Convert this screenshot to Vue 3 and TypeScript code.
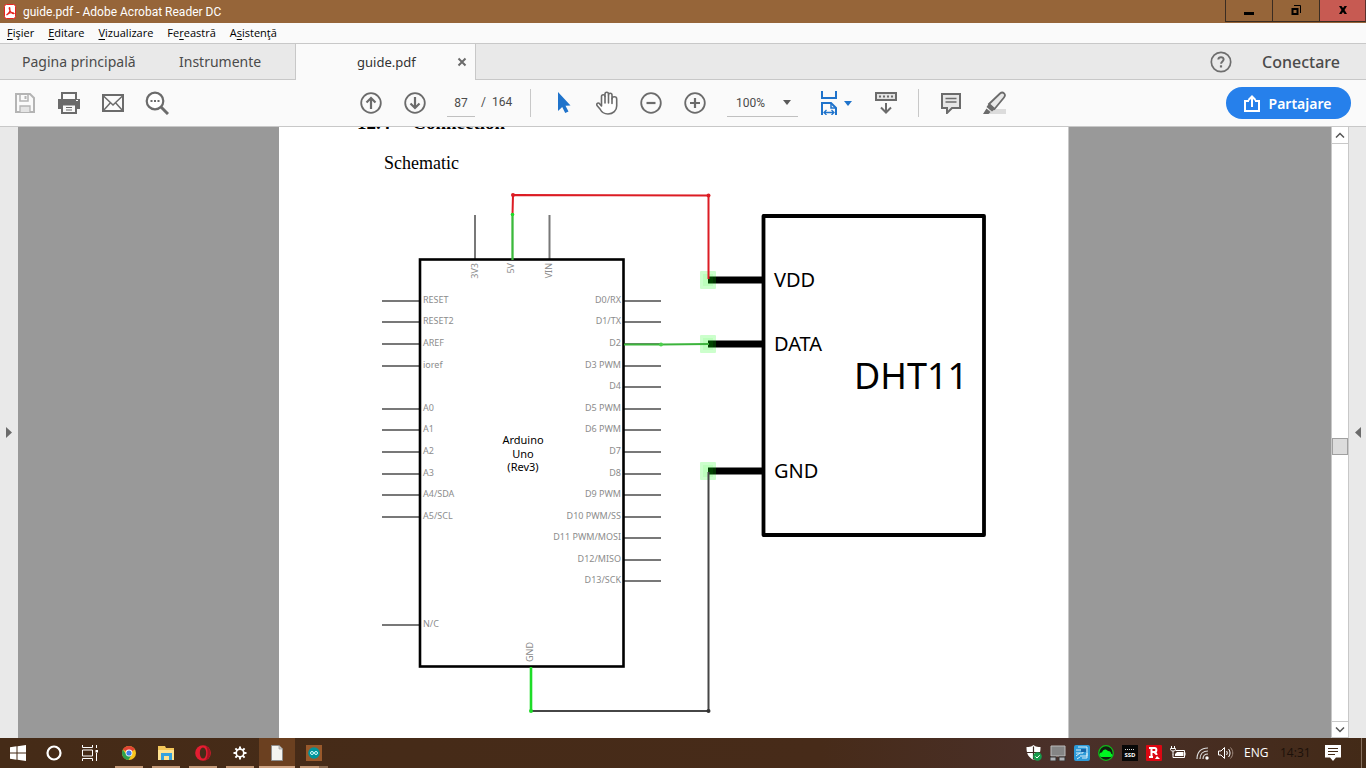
<script setup lang="ts">
import { ref } from 'vue'

interface Pin { label: string; y: number }

const menus: [string, string, string][] = [
  ['', 'F', 'işier'], ['', 'E', 'ditare'], ['', 'V', 'izualizare'], ['Fe', 'r', 'eastră'], ['A', 's', 'istenţă'],
]
const page = ref('87')
const zoom = ref('100%')

const leftPins: Pin[] = [
  { label: 'RESET', y: 301 }, { label: 'RESET2', y: 322 }, { label: 'AREF', y: 344 }, { label: 'ioref', y: 366 },
  { label: 'A0', y: 409 }, { label: 'A1', y: 430 }, { label: 'A2', y: 452 }, { label: 'A3', y: 474 },
  { label: 'A4/SDA', y: 495 }, { label: 'A5/SCL', y: 517 }, { label: 'N/C', y: 625 },
]
const rightPins: Pin[] = [
  { label: 'D0/RX', y: 301 }, { label: 'D1/TX', y: 322 }, { label: 'D2', y: 344 }, { label: 'D3 PWM', y: 366 },
  { label: 'D4', y: 387 }, { label: 'D5 PWM', y: 409 }, { label: 'D6 PWM', y: 430 }, { label: 'D7', y: 452 },
  { label: 'D8', y: 474 }, { label: 'D9 PWM', y: 495 }, { label: 'D10 PWM/SS', y: 517 }, { label: 'D11 PWM/MOSI', y: 538 },
  { label: 'D12/MISO', y: 560 }, { label: 'D13/SCK', y: 581 },
]
const sensorPins: Pin[] = [{ label: 'VDD', y: 280 }, { label: 'DATA', y: 344 }, { label: 'GND', y: 471 }]
</script>

<template>
  <div class="app">
    <header class="titlebar">
      <svg class="app-icon" width="12" height="15" viewBox="0 0 12 15"><rect x=".5" y=".5" width="11" height="14" rx="2" fill="#fff" stroke="#e8251f" /><path d="M2.500 11C5 9.500 6.300 6.500 5.800 4C5.500 3 4.800 4 5.500 5.500C6.500 8 8 9.800 10 9.500C9 8 5 8.500 2.500 11Z" fill="none" stroke="#e8251f" stroke-width="1.200" /></svg>
      <span class="title">guide.pdf - Adobe Acrobat Reader DC</span>
      <div class="win-buttons">
        <button aria-label="Minimizare"><svg width="12" height="12"><path d="M1 7h10v3H1z" /></svg></button>
        <button aria-label="Restabilire"><svg width="12" height="12"><path d="M2.500 4h5v5h-5z" fill="none" stroke="#000" stroke-width="2" /><path d="M4 .5h6.500V8" fill="none" stroke="#000" /></svg></button>
        <button class="close" aria-label="Închidere"><svg width="12" height="12"><path d="M2 1h2.500L6 3l1.500-2H10L7.500 5 10 9H7.500L6 7l-1.500 2H2l2.500-4z" /></svg></button>
      </div>
    </header>

    <nav class="menubar">
      <button v-for="m in menus" :key="m[1]">{{ m[0] }}<u>{{ m[1] }}</u>{{ m[2] }}</button>
    </nav>

    <div class="tabs">
      <div class="fixed-tabs">
        <button class="home-tab">Pagina principală</button>
        <button class="tools-tab">Instrumente</button>
      </div>
      <div class="doc-tab">
        <span>guide.pdf</span>
        <button aria-label="Închide fila"><svg width="10" height="10" viewBox="0 0 10 10"><path d="M1.500 1.500l7 7m0-7l-7 7" stroke="#6b6b6b" stroke-width="2" /></svg></button>
      </div>
      <div class="tab-actions">
        <button aria-label="Ajutor"><svg width="22" height="22" viewBox="0 0 22 22" fill="none" stroke="#6e6e6e"><circle cx="11" cy="11" r="9.700" stroke-width="1.700" /><path d="M8.300 8.500c.3-3.300 5.500-3 5.300 0-.1 1.900-2.500 2-2.500 4.300" stroke-width="2" /><path d="M11 14.300v2.200" stroke-width="2.200" /></svg></button>
        <button class="sign-in">Conectare</button>
      </div>
    </div>

    <div class="toolbar">
      <div class="tool-group start">
        <button class="tool" aria-label="Salvare"><svg width="22" height="22" viewBox="0 0 22 22" fill="none" stroke="#b4b4b4" stroke-width="2"><path d="M2 2h14l4 4v14H2z" /><path d="M6 2v7h8V2" stroke-width="1.500" /><path d="M11.500 4v3" /><path d="M6 20v-6h10v6" fill="#e4e4e4" stroke-width="1.300" /></svg></button>
        <button class="tool" aria-label="Imprimare"><svg width="22" height="22" viewBox="0 0 22 22"><path d="M4 7V1h14v6" fill="#fafafa" stroke="#6b6b6b" stroke-width="2" /><path d="M0 7h22v10H0z" fill="#6b6b6b" /><path d="M4 12.500h14V21H4z" fill="#fafafa" stroke="#6b6b6b" stroke-width="2" /><path d="M8 15.500h6M8 18h6" stroke="#6b6b6b" /><path d="M18 8.500h2" stroke="#fff" /></svg></button>
        <button class="tool" aria-label="E-mail"><svg width="22" height="18" viewBox="0 0 22 18" fill="none" stroke="#6b6b6b"><rect x="1" y="1" width="20" height="16" stroke-width="2" /><path d="M1.500 2L11 11l9.500-9M1.500 16.500L8.200 9M20.500 16.500L13.800 9" stroke-width="1.500" /></svg></button>
        <button class="tool" aria-label="Căutare"><svg width="24" height="24" viewBox="0 0 24 24" fill="none" stroke="#6b6b6b"><circle cx="10" cy="10" r="8.300" stroke-width="2.200" fill="#fff" /><path d="M16 16l7 7" stroke-width="3" /><path d="M5.500 10h2m1.500 0h2m1.500 0h2" stroke-width="2" /></svg></button>
      </div>

      <div class="tool-group">
        <button class="tool" aria-label="Pagina anterioară"><svg width="22" height="22" viewBox="0 0 22 22" fill="none" stroke="#6b6b6b" stroke-width="2"><circle cx="11" cy="11" r="9.800" stroke-width="1.800" /><path d="M11 17V6M6.500 10.500L11 6l4.500 4.500" stroke-width="2.200" /></svg></button>
        <button class="tool" aria-label="Pagina următoare"><svg width="22" height="22" viewBox="0 0 22 22" fill="none" stroke="#6b6b6b" stroke-width="2"><circle cx="11" cy="11" r="9.800" stroke-width="1.800" /><path d="M11 5v11M6.500 11.500L11 16l4.500-4.500" stroke-width="2.200" /></svg></button>
        <div class="page-nav"><input v-model="page" aria-label="Număr pagină" /><span class="slash">/</span><span>164</span></div>
        <i class="sep"></i>
        <button class="tool" aria-label="Selectare"><svg width="16" height="22" viewBox="0 0 16 22"><path d="M3 0l12.500 13.500-5 .2 3 5.800-3.300 1.500-3-6L3 19z" fill="#1f73cb" /></svg></button>
        <button class="tool" aria-label="Mână"><svg width="22" height="24" viewBox="0 0 22 24" fill="#fff" stroke="#6b6b6b" stroke-width="1.600" stroke-linejoin="round" stroke-linecap="round"><path d="M5.500 15V5.500a1.700 1.700 0 0 1 3.500 0V3a1.700 1.700 0 0 1 3.500 0v1a1.700 1.700 0 0 1 3.500 0v4c0-3 4.700-3 4.700 0v7c0 4.500-3.500 8-8.700 8-4.500 0-6.500-2-8-5L1 14.500c-1-2.500 1.500-3.300 3-1.300z" /><path d="M9 5.500V12M12.500 4v8M16 7.500V12.500" /></svg></button>
        <button class="tool" aria-label="Micşorare"><svg width="22" height="22" viewBox="0 0 22 22" fill="none" stroke="#6b6b6b"><circle cx="11" cy="11" r="9.800" stroke-width="1.800" /><path d="M6.500 11h9" stroke-width="2.200" /></svg></button>
        <button class="tool" aria-label="Mărire"><svg width="22" height="22" viewBox="0 0 22 22" fill="none" stroke="#6b6b6b"><circle cx="11" cy="11" r="9.800" stroke-width="1.800" /><path d="M6 11h10M11 6v10" stroke-width="2.200" /></svg></button>
        <div class="zoom">
          <select v-model="zoom" aria-label="Zoom"><option>100%</option></select>
          <svg width="8" height="5"><path d="M0 0h8L4 5z" fill="#5a5a5a" /></svg>
        </div>
        <button class="fit" aria-label="Potrivire lăţime">
          <svg width="18" height="24" viewBox="0 0 18 24" fill="none" stroke="#1f73cb" stroke-width="2"><path d="M2 0v7h14V0M2 24V12h9l5 5v7" /><path d="M11 12v5h5" stroke-width="1.500" /><path d="M4.500 21.500h9M6.500 19l-2.500 2.500 2.500 2.500M11.500 19l2.500 2.500-2.500 2.500" stroke-width="1.300" /></svg>
          <svg width="8" height="5"><path d="M0 0h8L4 5z" fill="#1f73cb" /></svg>
        </button>
        <button class="tool" aria-label="Bara de instrumente"><svg width="22" height="22" viewBox="0 0 22 22" fill="none" stroke="#6b6b6b" stroke-width="2"><rect x="1" y="1" width="20" height="7" fill="#e4e4e4" /><path d="M4 4.500h14" stroke-dasharray="2 2" /><path d="M11 11v9M6 15.500l5 5 5-5" /></svg></button>
        <i class="sep wide"></i>
        <button class="tool" aria-label="Comentariu"><svg width="22" height="22" viewBox="0 0 22 22" stroke="#6b6b6b" stroke-width="2"><path d="M2 2h18v14h-8l-5 5v-5H2z" fill="#e6e6e6" /><path d="M5.500 6.500h11M5.500 10h11" stroke-width="1.300" /></svg></button>
        <button class="tool" aria-label="Evidenţiere"><svg width="24" height="24" viewBox="0 0 24 24"><path d="M6 18h17v5H3z" fill="#dcdcdc" /><path d="M6 13L17 2.500c3-2.500 6.500 1 4 4L11.500 18z" fill="#e8e8e8" stroke="#6b6b6b" stroke-width="1.800" /><path d="M6 12.500l6 5.500-3 2.500-5.500-4.500zM3.500 17.500l4 3.500-2 2H0z" fill="#6b6b6b" /></svg></button>
      </div>

      <button class="share"><svg width="16" height="17" viewBox="0 0 16 17" fill="none" stroke="#fff" stroke-width="2"><path d="M5 6H1v10h14V6h-4M8 12V2M4.500 5L8 1.500 11.500 5" /></svg>Partajare</button>
    </div>

    <main class="viewer">
      <button class="rail" aria-label="Panou stânga"><svg width="6" height="11"><path d="M0 0l6 5.500L0 11z" fill="#6b6b6b" /></svg></button>
      <section class="canvas">
        <article class="page">
          <h1>12.4<span>Connection</span></h1>
          <p>Schematic</p>
          <svg class="schematic" viewBox="279 174 789 564">
            <g fill="none" stroke="#787878" stroke-width="2">
              <path v-for="p in leftPins" :key="p.label" :d="`M382 ${p.y}H420`" />
              <path v-for="p in rightPins" :key="p.label" :d="`M624 ${p.y}H661`" />
              <path d="M475 215V259M549.500 215V259" />
            </g>
            <rect x="420" y="259.500" width="203.500" height="407" fill="none" stroke="#000" stroke-width="2.600" />
            <g class="pin-text">
              <text v-for="p in leftPins" :key="p.label" x="423" :y="p.y + 2">{{ p.label }}</text>
              <text v-for="p in rightPins" :key="p.label" x="621" :y="p.y + 2" text-anchor="end">{{ p.label }}</text>
              <text transform="translate(478 263) rotate(-90)" text-anchor="end">3V3</text>
              <text transform="translate(514 263) rotate(-90)" text-anchor="end">5V</text>
              <text transform="translate(552 263) rotate(-90)" text-anchor="end">VIN</text>
              <text transform="translate(533 662) rotate(-90)">GND</text>
            </g>
            <g class="board-text" text-anchor="middle">
              <text x="523" y="444">Arduino</text><text x="523" y="458">Uno</text><text x="523" y="471">(Rev3)</text>
            </g>
            <rect x="763.500" y="216" width="220.500" height="319" fill="none" stroke="#000" stroke-width="3.800" stroke-linejoin="round" />
            <g v-for="p in sensorPins" :key="p.label">
              <path :d="`M708 ${p.y}H763`" stroke="#000" stroke-width="7" />
              <rect x="700" :y="p.y - 9" width="16" height="18" rx="1" fill="#0f0" fill-opacity=".2" />
              <rect x="703" :y="p.y - 6" width="10" height="12" fill="#0f0" fill-opacity=".08" />
              <text class="sensor-text" x="774" :y="p.y + 7">{{ p.label }}</text>
            </g>
            <text class="chip-text" x="854" y="389">DHT11</text>
            <g fill="none" stroke-width="2">
              <path d="M512.500 215L513 195L708.500 195.500V279" stroke="#dc1c24" />
              <path d="M512.500 214V260" stroke="#3cb93c" stroke-width="2.300" />
              <path d="M624 344.500H661L709 344" stroke="#3cb43c" />
              <path d="M531 667V711" stroke="#1edc28" stroke-width="2.600" />
              <path d="M532 711H708.500V472" stroke="#464646" />
            </g>
            <g fill="#dc1c24"><circle cx="513" cy="195" r="2" /><circle cx="708.500" cy="195.500" r="2" /></g>
            <circle cx="512.500" cy="214.500" r="1.800" fill="#1edc28" /><circle cx="661" cy="344.500" r="2" fill="#4dd04d" />
            <circle cx="531" cy="711" r="2" fill="#1edc28" /><circle cx="708.500" cy="711" r="2" fill="#333" />
          </svg>
        </article>
      </section>
      <div class="scrollbar">
        <button aria-label="Sus"><svg width="10" height="6"><path d="M1 5.500l4-4 4 4" fill="none" stroke="#555" stroke-width="1.500" /></svg></button>
        <div class="track"><div class="above"></div><div class="thumb"></div><div class="below"></div></div>
        <button aria-label="Jos"><svg width="10" height="6"><path d="M1 .5l4 4 4-4" fill="none" stroke="#555" stroke-width="1.500" /></svg></button>
      </div>
      <button class="rail right" aria-label="Panou dreapta"><svg width="6" height="11"><path d="M6 0L0 5.500 6 11z" fill="#6b6b6b" /></svg></button>
    </main>

    <footer class="taskbar">
      <div class="system">
        <button aria-label="Start"><svg width="16" height="16" viewBox="0 0 16 16" fill="#fff"><path d="M0 2.200l6.500-.9v6.200H0zM7.500 1.200L16 0v7.500H7.500zM0 8.500h6.500v6.200L0 13.800zM7.500 8.500H16V16l-8.500-1.200z" /></svg></button>
        <button aria-label="Cortana"><svg width="16" height="16"><circle cx="8" cy="8" r="6.500" fill="none" stroke="#fff" stroke-width="2.200" /></svg></button>
        <button aria-label="Vizualizare activităţi"><svg width="16" height="16" viewBox="0 0 16 16" fill="none" stroke="#fff"><path d="M.5 0v2.500h10V0M.5 16v-2.500h10V16M.5 5h10v6H.5zM14.500 0v3M14.500 8v8" /><path d="M13.500 5h2.500v2.500h-2.500z" fill="#fff" stroke="none" /></svg></button>
      </div>
      <div class="apps">
        <button aria-label="Chrome"><svg width="14" height="14" viewBox="0 0 14 14"><circle cx="7" cy="7" r="7" fill="#f9c51d" /><path d="M7 7L.9 3.500A7 7 0 0 1 13 3.500z" fill="#e14435" /><path d="M.9 3.500A7 7 0 0 0 6.500 14L9.500 9 4 8z" fill="#2da04e" /><circle cx="7" cy="7" r="3.400" fill="#fff" /><circle cx="7" cy="7" r="2.600" fill="#3f80e8" /></svg></button>
        <button aria-label="Explorer"><svg width="16" height="14" viewBox="0 0 16 14"><path d="M0 0h7l1 2h8v12H0z" fill="#f4c75a" /><path d="M0 4h16v10H0z" fill="#ffe391" /><path d="M3 7h11v7h-3v-4H6v4H3z" fill="#35a3df" /></svg></button>
        <button aria-label="Opera"><svg width="16" height="16" viewBox="0 0 16 16"><circle cx="8" cy="8" r="7.800" fill="#e51d31" /><path d="M10 .6a7.800 7.800 0 0 1 0 14.800c2-2 2.500-4.500 2.500-7.400S12 2.600 10 .6z" fill="#a41322" /><ellipse cx="8" cy="8" rx="3.200" ry="5.500" fill="#452c19" /></svg></button>
        <button aria-label="Setări"><svg width="14" height="14" viewBox="0 0 14 14" fill="none" stroke="#fff"><circle cx="7" cy="7" r="3.800" stroke-width="1.700" /><path d="M7 .5v2.500M7 11v2.500M.5 7H3M11 7h2.500M2.400 2.400l1.800 1.800M9.800 9.800l1.800 1.800M2.400 11.600l1.800-1.800M9.800 4.200l1.800-1.800" stroke-width="2" /></svg></button>
        <button class="active" aria-label="Document"><svg width="12" height="16" viewBox="0 0 12 16"><path d="M.5.5h7.500L11.500 4v11.500H.5z" fill="#f4f4f0" stroke="#8e8e8e" /><path d="M8 .5V4h3.500" fill="#c9c9c9" stroke="#999" stroke-width=".7" /></svg></button>
        <button class="stacked" aria-label="Arduino"><svg width="16" height="16" viewBox="0 0 16 16"><path d="M0 0h16v16H0z" fill="#99592b" /><circle cx="8" cy="8" r="5.800" fill="#00959b" /><circle cx="6" cy="8" r="1.500" fill="none" stroke="#d8ffff" /><circle cx="10" cy="8" r="1.500" fill="none" stroke="#d8ffff" /></svg></button>
      </div>
      <div class="tray">
        <button aria-label="Securitate"><svg width="16" height="16" viewBox="0 0 16 16"><path d="M7.500 0C5 2 3 2 .5 2c0 6 1 9.500 7 13 6-3.500 7-7 7-13-2.500 0-4.500 0-7-2z" fill="#fff" /><path d="M7.500 1.500v13M1 7.500h13" stroke="#3d2b24" stroke-width="1.200" /><circle cx="11.500" cy="11.500" r="4.300" fill="#169b4c" /><path d="M9.500 11.500l1.500 1.500 2.700-2.800" fill="none" stroke="#fff" /></svg></button>
        <button aria-label="Dispozitiv"><svg width="16" height="16" viewBox="0 0 16 16"><path d="M1 1h14v10H1z" fill="#858585" stroke="#bbb" /><path d="M0 12h6v4H0zM9 12h6v4H9z" fill="#aeb0b4" stroke="#333" /></svg></button>
        <button aria-label="Grafică"><svg width="16" height="16" viewBox="0 0 16 16"><rect width="16" height="16" rx="2" fill="#2c9ad8" /><path d="M4 2h9v9H6M2 5h7v3H2m0 3l4-3m2 5h5V8M3 14l3-2" stroke="#d8eef8" fill="none" /><path d="M7 4h5v3H7z" fill="#1665a9" /></svg></button>
        <button aria-label="Cloud"><svg width="16" height="16" viewBox="0 0 16 16"><circle cx="8" cy="8" r="7.300" fill="#102010" stroke="#11b91a" stroke-width="1.300" /><path d="M3 12c-3-2-1-5 1-4.500C5 4 8 3.500 10 6c2 0 3 1 3 2.500 2 .5 2 3 0 3.500z" fill="#00f522" /></svg></button>
        <button aria-label="SSD"><svg width="16" height="16" viewBox="0 0 16 16"><path d="M0 0h16v16H0z" fill="#080808" /><path d="M3 4.500h10" stroke="#ddd" stroke-dasharray="1 1" /><text x="8" y="12" text-anchor="middle" font-size="6" font-weight="700" fill="#fff">SSD</text></svg></button>
        <button aria-label="Antivirus"><svg width="16" height="16" viewBox="0 0 16 16"><rect width="16" height="16" rx="1" fill="#dc0712" /><path d="M3 3h5.500c2.500 0 2.500 4 0 4H5.500M5.500 3v9M3 12h4M8 7.500c2 0 2.500 1 2.500 2.500" fill="none" stroke="#fff" stroke-width="2" /><path d="M9 14l2-3 3 3z" fill="#fff" /></svg></button>
        <button aria-label="Baterie"><svg width="16" height="14" viewBox="0 0 16 14" fill="none" stroke="#fff"><path d="M5.500 4.500h9v7H3v-3" /><path d="M7 6h6.500v4H5V8z" fill="#fff" stroke="none" /><path d="M15 6.500v3M1.500 0v2M4.500 0v2M3 5v4M.5 2.500h5v1c0 2-5 2-5 0z" /></svg></button>
        <button aria-label="Wi-Fi"><svg width="14" height="14" viewBox="0 0 14 14" fill="none" stroke="#ddd" stroke-width="1.200"><path d="M2 13C2 6 6 2 13 2M5 13c0-5 3-8 8-8M8 13c0-3 2-5 5-5" /><circle cx="12" cy="12" r="1.700" fill="#fff" stroke="none" /></svg></button>
        <button aria-label="Volum"><svg width="16" height="14" viewBox="0 0 16 14" fill="none" stroke="#fff"><path d="M.5 5h2.500l3.500-3.500v11L3 9H.5z" /><path d="M8.500 5c1 1.300 1 2.700 0 4" /><path d="M10.500 3c2 2.500 2 5.500 0 8" /><path d="M12.500 1.500c3 3.500 3 7.500 0 11" stroke="#a18c80" /></svg></button>
        <span class="lang">ENG</span>
        <time>14:31</time>
        <button class="notes" aria-label="Notificări"><svg width="16" height="16" viewBox="0 0 16 16"><path d="M0 0h16v12.500h-5L8 16l-3-3.500H0z" fill="#fff" /><path d="M3 3.500h10M3 6.500h10M3 9.500h7" stroke="#432a17" /></svg></button>
        <i class="desktop"></i>
      </div>
    </footer>
  </div>
</template>

<style>
body { margin: 0; }
</style>

<style scoped>
.app { height: 100vh; display: flex; flex-direction: column; overflow: hidden; font-family: "Noto Sans", "Open Sans", sans-serif; background: #fafafa; color: #4b4b4b; }
button { font: inherit; color: inherit; border: 0; background: none; padding: 0; margin: 0; display: flex; align-items: center; justify-content: center; white-space: pre; }
svg { display: block; flex: none; }
.titlebar { height: 23px; background: #966539; display: flex; align-items: center; flex: none; padding-left: 4px; }
.title { color: #fff; font: 12px/20px Roboto, sans-serif; margin-left: 7px; }
.win-buttons { display: flex; margin-left: auto; height: 22px; align-self: flex-start; }
.win-buttons button { width: 47px; box-sizing: border-box; border-left: 1px solid #3a2c22; border-bottom: 1px solid #3a2c22; }
.win-buttons .close { background: #c75a52; border-right: 1px solid #5a302c; }
.menubar { height: 20px; flex: none; display: flex; gap: 14px; padding-left: 7px; color: #000; font: 11px/20px "Open Sans", sans-serif; }
.menubar u { text-underline-offset: 2px; }
.tabs { height: 37px; box-sizing: border-box; flex: none; display: flex; background: #e9e9e9; border-top: 1px solid #c8c8c8; font-size: 14px; }
.fixed-tabs { width: 295px; display: flex; border-right: 1px solid #c8c8c8; border-bottom: 1px solid #c8c8c8; }
.home-tab { margin-left: 22px; width: 118px; justify-content: start; }
.tools-tab { margin-left: 39px; }
.doc-tab { width: 179px; display: flex; align-items: center; background: #fafafa; border-right: 1px solid #c8c8c8; color: #323232; font-size: 13px; }
.doc-tab span { margin-left: 61px; width: 100px; }
.tab-actions { flex: 1; display: flex; justify-content: end; align-items: center; gap: 30px; padding-right: 26px; border-bottom: 1px solid #c8c8c8; }
.sign-in { font-weight: 500; font-size: 16px; }
.toolbar { height: 47px; box-sizing: border-box; flex: none; display: grid; grid-template-columns: 1fr auto 1fr; align-items: center; border-bottom: 1px solid #c8c8c8; }
.tool-group { display: flex; align-items: center; }
.start { padding-left: 3px; }
.tool { width: 44px; height: 40px; }
.page-nav { width: 83px; height: 28px; padding-left: 10px; display: flex; font: 12px/27px Roboto, sans-serif; }
.page-nav input { width: 28px; height: 28px; box-sizing: border-box; padding: 0; border: 0; border-bottom: 1px solid #c0c0c0; background: none; font: inherit; color: #4b4b4b; text-align: center; }
.slash { margin: 0 6px; }
.sep { width: 1px; height: 28px; background: #c8c8c8; margin-right: 10px; }
.wide { margin-left: 10px; }
.zoom { width: 71px; height: 28px; box-sizing: border-box; margin-left: 10px; border-bottom: 1px solid #c0c0c0; display: flex; align-items: center; }
.zoom select { appearance: none; width: 56px; height: 27px; padding: 0 0 0 9px; border: 0; background: none; font: 12px Roboto, sans-serif; color: #4b4b4b; }
.fit { width: 66px; height: 40px; gap: 6px; justify-content: start; padding-left: 22px; }
.share { justify-self: end; margin-right: 15px; width: 125px; height: 32px; border-radius: 16px; background: #2680eb; color: #fff; font-weight: 600; font-size: 14px; gap: 9px; padding-right: 2px; }
.viewer { flex: 1; min-height: 0; display: flex; }
.rail { width: 18px; background: #e9e9e9; }
.right { box-sizing: border-box; border-left: 1px solid #c8c8c8; }
.canvas { flex: 1; min-width: 0; background: #999; display: flex; justify-content: center; padding-right: 1px; overflow: hidden; }
.page { width: 790px; box-sizing: border-box; border-right: 1px solid #c8c8c8; background: #fff; color: #000; font-family: "Liberation Serif", serif; }
.page h1 { margin: -15px 0 0 78px; font-size: 19px; line-height: 22px; display: flex; }
.page h1 span { margin-left: 22px; }
.page p { margin: 18px 0 0 105px; font-size: 18px; line-height: 22px; }
.schematic { width: 100%; font-family: "Noto Sans", sans-serif; fill: #000; }
.pin-text { font-size: 9px; fill: #8c8c8c; }
.board-text { font-size: 11px; }
.sensor-text { font-size: 20px; }
.chip-text { font-size: 36px; }
.scrollbar { width: 17px; box-sizing: border-box; border-left: 1px solid #c8c8c8; background: #fff; display: flex; flex-direction: column; }
.scrollbar button { height: 17px; box-sizing: border-box; border-bottom: 1px solid #c8c8c8; }
.track { flex: 1; display: flex; flex-direction: column; }
.above { flex: 294; }
.below { flex: 266; }
.thumb { height: 17px; box-sizing: border-box; background: #dcdcdc; border: 1px solid #a0a0a0; }
.scrollbar button:last-child { border-top: 1px solid #c8c8c8; }
.taskbar { height: 30px; flex: none; display: flex; color: #fff; background: linear-gradient(90deg, #452b17, #472b19 60%, #4a302a 78%, #432a17); }
.system, .apps, .tray { display: flex; align-items: center; }
.system button, .apps button { width: 36px; height: 30px; }
.apps { margin-left: 3px; gap: 1px; }
.apps button { box-sizing: border-box; padding-bottom: 1px; background: linear-gradient(#c49a78, #c49a78) center bottom / 28px 2px no-repeat; }
.apps .active { background: linear-gradient(#d0a584, #d0a584) center bottom / 36px 2px no-repeat, #6b4020; }
.apps .stacked { background: linear-gradient(90deg, #c49a78 19px, #8a6a50 19px) center bottom / 28px 2px no-repeat; }
.tray { margin-left: auto; font: 12px/30px "Open Sans", sans-serif; }
.tray button { width: 24px; height: 30px; }
.lang { margin-left: 6px; width: 36px; }
.tray time { color: #1c110a; width: 41px; }
.tray .notes { margin-right: 16px; }
.desktop { width: 1px; height: 30px; background: #86705f; margin-right: 4px; }
</style>
